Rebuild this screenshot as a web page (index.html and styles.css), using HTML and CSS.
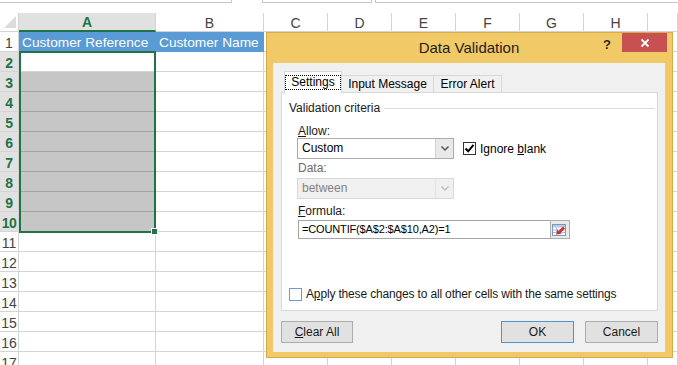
FILE: index.html
```html
<!DOCTYPE html>
<html>
<head>
<meta charset="utf-8">
<title>Data Validation</title>
<link rel="stylesheet" href="styles.css">
</head>
<body>
<div class="topbar"><div class="box box1"></div><div class="box box2"></div><div class="box box3"></div></div>
<div class="sheet">
  <span class="corner"><svg width="19" height="18" viewBox="0 0 19 18"><polygon points="16,3 16,15 4,15" fill="#dcdcdc"/></svg></span>
  <span class="hd on">A</span><span class="hd">B</span><span class="hd">C</span><span class="hd">D</span><span class="hd">E</span><span class="hd">F</span><span class="hd">G</span><span class="hd">H</span><span class="hd"></span>

  <span class="rh">1</span><span class="c th">Customer Reference</span><span class="c th">Customer Name</span><span class="c"></span><span class="c"></span><span class="c"></span><span class="c"></span><span class="c"></span><span class="c"></span><span class="c"></span>
  <span class="rh on">2</span><span class="c"></span><span class="c"></span><span class="c"></span><span class="c"></span><span class="c"></span><span class="c"></span><span class="c"></span><span class="c"></span><span class="c"></span>
  <span class="rh on">3</span><span class="c fill"></span><span class="c"></span><span class="c"></span><span class="c"></span><span class="c"></span><span class="c"></span><span class="c"></span><span class="c"></span><span class="c"></span>
  <span class="rh on">4</span><span class="c fill"></span><span class="c"></span><span class="c"></span><span class="c"></span><span class="c"></span><span class="c"></span><span class="c"></span><span class="c"></span><span class="c"></span>
  <span class="rh on">5</span><span class="c fill"></span><span class="c"></span><span class="c"></span><span class="c"></span><span class="c"></span><span class="c"></span><span class="c"></span><span class="c"></span><span class="c"></span>
  <span class="rh on">6</span><span class="c fill"></span><span class="c"></span><span class="c"></span><span class="c"></span><span class="c"></span><span class="c"></span><span class="c"></span><span class="c"></span><span class="c"></span>
  <span class="rh on">7</span><span class="c fill"></span><span class="c"></span><span class="c"></span><span class="c"></span><span class="c"></span><span class="c"></span><span class="c"></span><span class="c"></span><span class="c"></span>
  <span class="rh on">8</span><span class="c fill"></span><span class="c"></span><span class="c"></span><span class="c"></span><span class="c"></span><span class="c"></span><span class="c"></span><span class="c"></span><span class="c"></span>
  <span class="rh on">9</span><span class="c fill"></span><span class="c"></span><span class="c"></span><span class="c"></span><span class="c"></span><span class="c"></span><span class="c"></span><span class="c"></span><span class="c"></span>
  <span class="rh on">10</span><span class="c fill"></span><span class="c"></span><span class="c"></span><span class="c"></span><span class="c"></span><span class="c"></span><span class="c"></span><span class="c"></span><span class="c"></span>
  <span class="rh">11</span><span class="c"></span><span class="c"></span><span class="c"></span><span class="c"></span><span class="c"></span><span class="c"></span><span class="c"></span><span class="c"></span><span class="c"></span>
  <span class="rh">12</span><span class="c"></span><span class="c"></span><span class="c"></span><span class="c"></span><span class="c"></span><span class="c"></span><span class="c"></span><span class="c"></span><span class="c"></span>
  <span class="rh">13</span><span class="c"></span><span class="c"></span><span class="c"></span><span class="c"></span><span class="c"></span><span class="c"></span><span class="c"></span><span class="c"></span><span class="c"></span>
  <span class="rh">14</span><span class="c"></span><span class="c"></span><span class="c"></span><span class="c"></span><span class="c"></span><span class="c"></span><span class="c"></span><span class="c"></span><span class="c"></span>
  <span class="rh">15</span><span class="c"></span><span class="c"></span><span class="c"></span><span class="c"></span><span class="c"></span><span class="c"></span><span class="c"></span><span class="c"></span><span class="c"></span>
  <span class="rh">16</span><span class="c"></span><span class="c"></span><span class="c"></span><span class="c"></span><span class="c"></span><span class="c"></span><span class="c"></span><span class="c"></span><span class="c"></span>
  <span class="rh">17</span><span class="c"></span><span class="c"></span><span class="c"></span><span class="c"></span><span class="c"></span><span class="c"></span><span class="c"></span><span class="c"></span><span class="c"></span>

  <div class="selection"><i class="handle"></i></div>
</div>

<div class="dialog">
  <div class="titlebar">
    <span></span>
    <span class="title">Data Validation</span>
    <span class="controls">
      <span class="help">?</span>
      <span class="close"><svg width="10" height="10" viewBox="0 0 10 10"><path d="M1.5 1.5 L8.5 8.5 M8.5 1.5 L1.5 8.5" stroke="#fff" stroke-width="1.8" fill="none"/></svg></span>
    </span>
  </div>
  <div class="body">
    <div class="tabs">
      <div class="tab active"><span class="focus">Settings</span></div>
      <div class="tab tab-input">Input Message</div>
      <div class="tab tab-error">Error Alert</div>
    </div>
    <div class="panel">
      <div class="legend"><span>Validation criteria</span><span class="rule"></span></div>
      <div class="criteria">
        <div class="label"><u>A</u>llow:</div>
        <div class="allow-row">
          <div class="select">
            <span class="val">Custom</span>
            <span class="arrow"><svg width="8" height="5" viewBox="0 0 8 5"><path d="M0.5 0.5 L4 4 L7.5 0.5" stroke="#505050" stroke-width="1.4" fill="none"/></svg></span>
          </div>
          <div class="check-row">
            <span class="check on"><svg width="11" height="11" viewBox="0 0 11 11"><path d="M1.5 5.5 L4.2 8.3 L9.5 1.8" stroke="#000" stroke-width="2" fill="none"/></svg></span>
            <span>Ignore <u>b</u>lank</span>
          </div>
        </div>
        <div class="label disabled data-label">Data:</div>
        <div class="select disabled">
          <span class="val">between</span>
          <span class="arrow"><svg width="8" height="5" viewBox="0 0 8 5"><path d="M0.5 0.5 L4 4 L7.5 0.5" stroke="#bdbdbd" stroke-width="1.4" fill="none"/></svg></span>
        </div>
        <div class="label formula-label"><u>F</u>ormula:</div>
        <div class="formula">
          <span class="input">=COUNTIF($A$2:$A$10,A2)=1</span>
          <span class="range"><svg width="14" height="12" viewBox="0 0 14 12">
            <rect x="0.5" y="0.5" width="13" height="11" fill="#fff" stroke="#7d98b6"/>
            <rect x="1" y="1" width="12" height="2.5" fill="#b3cbe4"/>
            <path d="M1 6 H13 M1 8.5 H13 M4.5 3.5 V11" stroke="#a9bdd3" stroke-width="1"/>
            <path d="M12 3.5 L7.5 8" stroke="#d9262e" stroke-width="2.6"/>
            <polygon points="4.5,10.5 5.2,5.6 9.4,9.8" fill="#d9262e"/>
          </svg></span>
        </div>
      </div>
      <div class="apply-row">
        <span class="check blue"></span>
        <span class="apply-text">A<u>p</u>ply these changes to all other cells with the same settings</span>
      </div>
    </div>
    <div class="buttons">
      <div class="btn"><u>C</u>lear All</div>
      <div class="btn ok">OK</div>
      <div class="btn cancel">Cancel</div>
    </div>
  </div>
</div>
</body>
</html>
```

FILE: styles.css
```css
html, body {
  margin: 0;
  padding: 0;
}
body {
  width: 678px;
  height: 365px;
  overflow: hidden;
  position: relative;
  background: #ffffff;
  font-family: "Liberation Sans", Arial, sans-serif;
}

/* formula bar remnants at the very top */
.topbar {
  display: flex;
  height: 13px;
}
.box {
  height: 3px;
  box-sizing: border-box;
  border: 1px solid #c6c6c6;
  border-top: 0;
}
.box1 { width: 232px; border-left: 0; }
.box2 { width: 110px; margin-left: 30px; }
.box3 { flex: 1; margin-left: 3px; border-right: 0; }

/* spreadsheet grid */
.sheet {
  position: relative;
  display: grid;
  grid-template-columns: 19px 137px 108px repeat(6, 64px) 1fr;
  grid-template-rows: 19px repeat(17, 20px);
  font-size: 14px;
  color: #444;
}
.sheet > span {
  display: block;
  box-sizing: border-box;
  border-right: 1px solid #d4d4d4;
  border-bottom: 1px solid #d4d4d4;
  overflow: hidden;
  white-space: nowrap;
}
.corner {
  background: #fff;
}
.corner svg { display: block; }
.hd {
  text-align: center;
  line-height: 20px;
  background: #fff;
}
.hd.on {
  background: #e1e1e1;
  color: #217346;
  font-weight: bold;
  border-bottom: 2px solid #217346;
  line-height: 19px;
}
.rh {
  text-align: center;
  line-height: 22px;
  background: #fff;
  color: #444;
  border-right-color: #c8c8c8;
}
.rh.on {
  background: #e1e1e1;
  color: #217346;
  font-weight: bold;
  letter-spacing: -0.5px;
}
.c { background: #fff; }
.th {
  background: #5b9bd5;
  color: #fff;
  padding-left: 3px;
  line-height: 21px;
  border-right-color: #5b9bd5 !important;
  border-bottom-color: #5b9bd5 !important;
  font-size: 13.7px;
}
.fill {
  background: #c6c6c6;
  border-bottom-color: #a3a3a3 !important;
}
.selection {
  position: absolute;
  grid-column: 2 / 3;
  grid-row: 3 / 12;
  top: -1px;
  bottom: -1px;
  left: 0;
  right: 0;
  border: 2px solid #217346;
}
.handle {
  position: absolute;
  right: -4px;
  bottom: -4px;
  width: 5px;
  height: 5px;
  background: #217346;
  border: 1px solid #fff;
}

/* dialog window */
.dialog {
  position: absolute;
  left: 266px;
  top: 32px;
  width: 407px;
  height: 326px;
  box-sizing: border-box;
  background: #f1c966;
  border: 1px solid #d9ab4d;
  padding: 0 7px 5px 6px;
  display: flex;
  flex-direction: column;
  font-size: 12px;
  color: #000;
}
.titlebar {
  height: 30px;
  display: grid;
  grid-template-columns: 1fr auto 1fr;
}
.title {
  font-size: 15px;
  line-height: 30px;
  color: #1e1e1e;
}
.controls {
  justify-self: end;
  display: flex;
  align-items: flex-start;
  margin-right: -2px;
}
.help {
  font-weight: bold;
  font-size: 13px;
  color: #2b2b2b;
  line-height: 14px;
  margin-top: 5px;
  margin-right: 11px;
}
.close {
  width: 45px;
  height: 19px;
  background: #c75050;
  display: flex;
  align-items: center;
  justify-content: center;
}
.close svg { display: block; }

.body {
  flex: 1;
  background: #f0f0f0;
  padding: 8px 7px 9px 8px;
  display: flex;
  flex-direction: column;
}
.tabs {
  display: flex;
  align-items: flex-end;
  height: 21px;
  padding-left: 3px;
  position: relative;
  z-index: 1;
}
.tab {
  box-sizing: border-box;
  height: 17px;
  border: 1px solid #d9d9d9;
  border-bottom: 0;
  background: #f0f0f0;
  text-align: center;
  line-height: 16px;
  color: #000;
}
.tab.active {
  width: 58px;
  height: 22px;
  margin-bottom: -1px;
  background: #fff;
  padding: 3px 0 0 0;
}
.focus {
  display: block;
  height: 15px;
  line-height: 13px;
  box-sizing: border-box;
  border: 1px dotted #000;
}
.tab-input { width: 92px; border-left: 0; }
.tab-error { width: 68px; border-left: 0; }

.panel {
  height: 219px;
  box-sizing: border-box;
  background: #fff;
  border: 1px solid #d9d9d9;
  display: flex;
  flex-direction: column;
}
.legend {
  display: flex;
  align-items: center;
  margin-top: 8px;
  padding-left: 7px;
  line-height: 14px;
  color: #1a1a1a;
}
.rule {
  flex: 1;
  height: 1px;
  background: #dcdcdc;
  margin: 1px 2px 0 4px;
}
.criteria {
  padding-left: 15px;
  display: flex;
  flex-direction: column;
  align-items: flex-start;
}
.label {
  line-height: 14px;
  padding-left: 1px;
  color: #1a1a1a;
}
.criteria > .label:first-child { margin-top: 9px; }
.label.disabled { color: #6d6d6d; }
.data-label { margin-top: 2px; }
.formula-label { margin-top: 5px; }

.allow-row {
  display: flex;
  align-items: center;
}
.select {
  width: 157px;
  height: 21px;
  box-sizing: border-box;
  border: 1px solid #acacac;
  background: #fff;
  display: flex;
}
.select .val {
  flex: 1;
  padding-left: 4px;
  line-height: 19px;
}
.select .arrow {
  width: 17px;
  background: #e9e9e9;
  border-left: 1px solid #d2d2d2;
  display: flex;
  align-items: center;
  justify-content: center;
}
.select.disabled {
  margin-top: 3px;
  border-color: #d9d9d9;
  background: #f0f0f0;
  color: #838383;
}
.select.disabled .arrow {
  background: #f0f0f0;
  border-left-color: #e2e2e2;
}
.check-row {
  display: flex;
  align-items: center;
  margin-left: 9px;
  gap: 4px;
  line-height: 14px;
}
.check {
  width: 13px;
  height: 13px;
  box-sizing: border-box;
  border: 1px solid #333;
  background: #fff;
  display: flex;
  align-items: center;
  justify-content: center;
}
.check svg { display: block; }
.check.blue { border-color: #6f9bc4; }

.formula {
  margin-top: 2px;
  margin-left: 1px;
  display: flex;
  width: 272px;
  height: 19px;
}
.input {
  flex: 1;
  box-sizing: border-box;
  border: 1px solid #a5a5a5;
  border-right: 0;
  padding-left: 3px;
  line-height: 17px;
  background: #fff;
  white-space: nowrap;
  font-size: 11px;
  letter-spacing: -0.15px;
}
.range {
  width: 20px;
  box-sizing: border-box;
  border: 1px solid #adadad;
  background: #eaeaea;
  display: flex;
  align-items: center;
  justify-content: center;
}
.range svg { display: block; margin-left: -2px; }

.apply-row {
  margin-top: 48px;
  padding-left: 7px;
  display: flex;
  align-items: center;
  gap: 4px;
  line-height: 14px;
  color: #1a1a1a;
}
.apply-text {
  letter-spacing: -0.16px;
}

.buttons {
  margin-top: 10px;
  display: flex;
}
.btn {
  width: 72px;
  height: 22px;
  box-sizing: border-box;
  border: 1px solid #adadad;
  background: #e1e1e1;
  text-align: center;
  line-height: 20px;
  color: #1a1a1a;
}
.btn.ok {
  width: 73px;
  margin-left: auto;
  border-color: #4f93cf;
}
.btn.cancel {
  width: 73px;
  margin-left: 11px;
}
```
